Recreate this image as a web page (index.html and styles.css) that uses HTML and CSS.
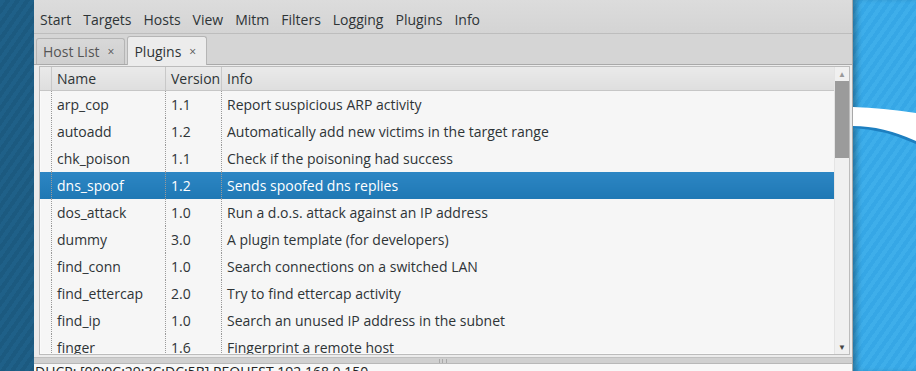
FILE: index.html
```html
<!DOCTYPE html>
<html lang="en">
  <head>
    <meta charset="utf-8">
    <title>ettercap - Plugins</title>
    <link rel="stylesheet" href="styles.css">
  </head>
  <body>
    <div class="desktop-left"></div>
    <div class="window">
      <ul class="menubar">
        <li>Start</li>
        <li>Targets</li>
        <li>Hosts</li>
        <li>View</li>
        <li>Mitm</li>
        <li>Filters</li>
        <li>Logging</li>
        <li>Plugins</li>
        <li>Info</li>
      </ul>
      <ul class="tabs">
        <li class="tab">Host List <span class="close">×</span></li>
        <li class="tab active">Plugins <span class="close">×</span></li>
      </ul>
      <div class="page">
        <div class="tree">
          <div class="tree-body">
            <table class="plugins">
              <thead>
                <tr>
                  <th class="c-pad"></th>
                  <th class="c-name">Name</th>
                  <th class="c-ver">Version</th>
                  <th class="c-info">Info</th>
                </tr>
              </thead>
              <tbody>
                <tr><td></td><td>arp_cop</td><td>1.1</td><td>Report suspicious ARP activity</td></tr>
                <tr><td></td><td>autoadd</td><td>1.2</td><td>Automatically add new victims in the target range</td></tr>
                <tr><td></td><td>chk_poison</td><td>1.1</td><td>Check if the poisoning had success</td></tr>
                <tr class="selected"><td></td><td>dns_spoof</td><td>1.2</td><td>Sends spoofed dns replies</td></tr>
                <tr><td></td><td>dos_attack</td><td>1.0</td><td>Run a d.o.s. attack against an IP address</td></tr>
                <tr><td></td><td>dummy</td><td>3.0</td><td>A plugin template (for developers)</td></tr>
                <tr><td></td><td>find_conn</td><td>1.0</td><td>Search connections on a switched LAN</td></tr>
                <tr><td></td><td>find_ettercap</td><td>2.0</td><td>Try to find ettercap activity</td></tr>
                <tr><td></td><td>find_ip</td><td>1.0</td><td>Search an unused IP address in the subnet</td></tr>
                <tr><td></td><td>finger</td><td>1.6</td><td>Fingerprint a remote host</td></tr>
              </tbody>
            </table>
          </div>
          <div class="scrollbar">
            <div class="arrow up">▲</div>
            <div class="thumb"></div>
            <div class="trough"></div>
            <div class="arrow down">▼</div>
          </div>
        </div>
      </div>
      <div class="pane-handle"><span class="grip"></span></div>
      <div class="status">DHCP: [00:0C:29:3C:DC:5B] REQUEST 192.168.0.150</div>
    </div>
    <div class="desktop-right">
      <svg class="swoosh" width="63" height="60" viewBox="0 0 63 60">
        <path d="M0 13 Q30 14 63 19 L63 49 Q30 34 0 33 Z" fill="#1d7fc0"/>
        <path d="M0 12 Q30 13 63 18 L63 46 Q30 31 0 31 Z" fill="#fff"/>
      </svg>
    </div>
  </body>
</html>
```

FILE: styles.css
```css
html, body {
  margin: 0;
  height: 100%;
  overflow: hidden;
}
body {
  display: flex;
  font-family: "Open Sans", "Noto Sans", sans-serif;
  font-size: 14px;
  color: #2e3436;
}
ul {
  list-style: none;
  margin: 0;
  padding: 0;
}

.desktop-left {
  width: 34px;
  flex: none;
  background: repeating-linear-gradient(-55deg, #1c5a80 0 4px, #1f6088 4px 8px);
}
.desktop-right {
  flex: 1;
  position: relative;
  background: repeating-linear-gradient(-55deg, #36a7e6 0 4px, #3eaeea 4px 8px);
  box-shadow: inset 6px 0 6px -3px rgba(0, 0, 0, 0.35);
}
.swoosh {
  position: absolute;
  left: 0;
  top: 95px;
}

.window {
  width: 819px;
  flex: none;
  display: flex;
  flex-direction: column;
  overflow: hidden;
  background: #d8d8d8;
  border-right: 1px solid #a8a8a8;
  box-sizing: border-box;
}
.window > * {
  flex: none;
}

.menubar {
  display: flex;
  gap: 12px;
  height: 34px;
  padding: 6px 0 0 6px;
  align-items: center;
  box-sizing: border-box;
  background: linear-gradient(#dcdcdc, #d4d4d4);
  border-bottom: 1px solid #bdbdbd;
}

.tabs {
  display: flex;
  gap: 2px;
  align-items: flex-end;
  height: 31px;
  padding-left: 2px;
  box-sizing: border-box;
  background: #d5d5d5;
  border-bottom: 1px solid #a9a9a9;
}
.tab {
  height: 26px;
  padding: 0 10px 0 6px;
  display: flex;
  align-items: center;
  box-sizing: border-box;
  border: 1px solid #b5b5b5;
  border-bottom: none;
  border-radius: 3px 3px 0 0;
  background: linear-gradient(#d8d8d8, #cfcfcf);
  color: #555;
}
.tab.active {
  height: 29px;
  margin-bottom: -1px;
  background: #ececec;
  color: #2e3436;
}
.close {
  font-size: 12px;
  margin-left: 8px;
  color: #555;
}

.page {
  height: 293px;
  padding: 1px 2px 2px 5px;
  box-sizing: border-box;
  background: #ececec;
  border-bottom: 1px solid #c0c0c0;
}
.tree {
  height: 100%;
  display: flex;
  border: 1px solid #bcbcbc;
  box-shadow: inset 0 0 0 1px #fafafa;
  box-sizing: border-box;
  background: #f6f6f6;
  overflow: hidden;
}
.tree-body {
  flex: 1;
  overflow: hidden;
}

.plugins {
  border-collapse: collapse;
  width: 100%;
}
.plugins th {
  height: 23px;
  padding: 0 0 0 5px;
  text-align: left;
  font-weight: normal;
  background: linear-gradient(#eaeaea, #dedede);
  border-bottom: 1px solid #c6c6c6;
  border-left: 1px solid #c8c8c8;
}
.plugins th.c-pad {
  border-left: none;
  width: 11px;
  padding: 0;
}
.plugins th.c-name { width: 108px; }
.plugins th.c-ver { width: 50px; }
.plugins td {
  height: 27px;
  padding: 0 0 0 5px;
  white-space: nowrap;
  border-left: 1px dotted #9a9a9a;
}
.plugins td:first-child {
  border-left: none;
  padding: 0;
}
.plugins tr.selected td {
  background: linear-gradient(#2d86c4, #1f78b4);
  color: #fff;
}

.scrollbar {
  width: 14px;
  flex: none;
  display: flex;
  flex-direction: column;
  background: #f0f0f0;
  border-left: 1px solid #e4e4e4;
}
.arrow {
  height: 14px;
  font-size: 8px;
  line-height: 14px;
  text-align: center;
  color: #999;
}
.arrow.down {
  color: #444;
}
.thumb {
  height: 77px;
  background: #9b9b9b;
}
.trough {
  flex: 1;
}

.pane-handle {
  height: 5px;
  background: #d0d0d0;
  border-bottom: 1px solid #b8b8b8;
  display: flex;
  justify-content: center;
  align-items: center;
}
.grip {
  width: 6px;
  height: 4px;
  border-left: 1px solid #aaa;
  border-right: 1px solid #aaa;
  background: linear-gradient(90deg, transparent 2px, #aaa 2px 3px, transparent 3px);
}
.status {
  height: 20px;
  background: #f8f8f8;
  padding: 0 0 0 1px;
  line-height: 16px;
  font-size: 14px;
  color: #222;
  white-space: nowrap;
}
```
